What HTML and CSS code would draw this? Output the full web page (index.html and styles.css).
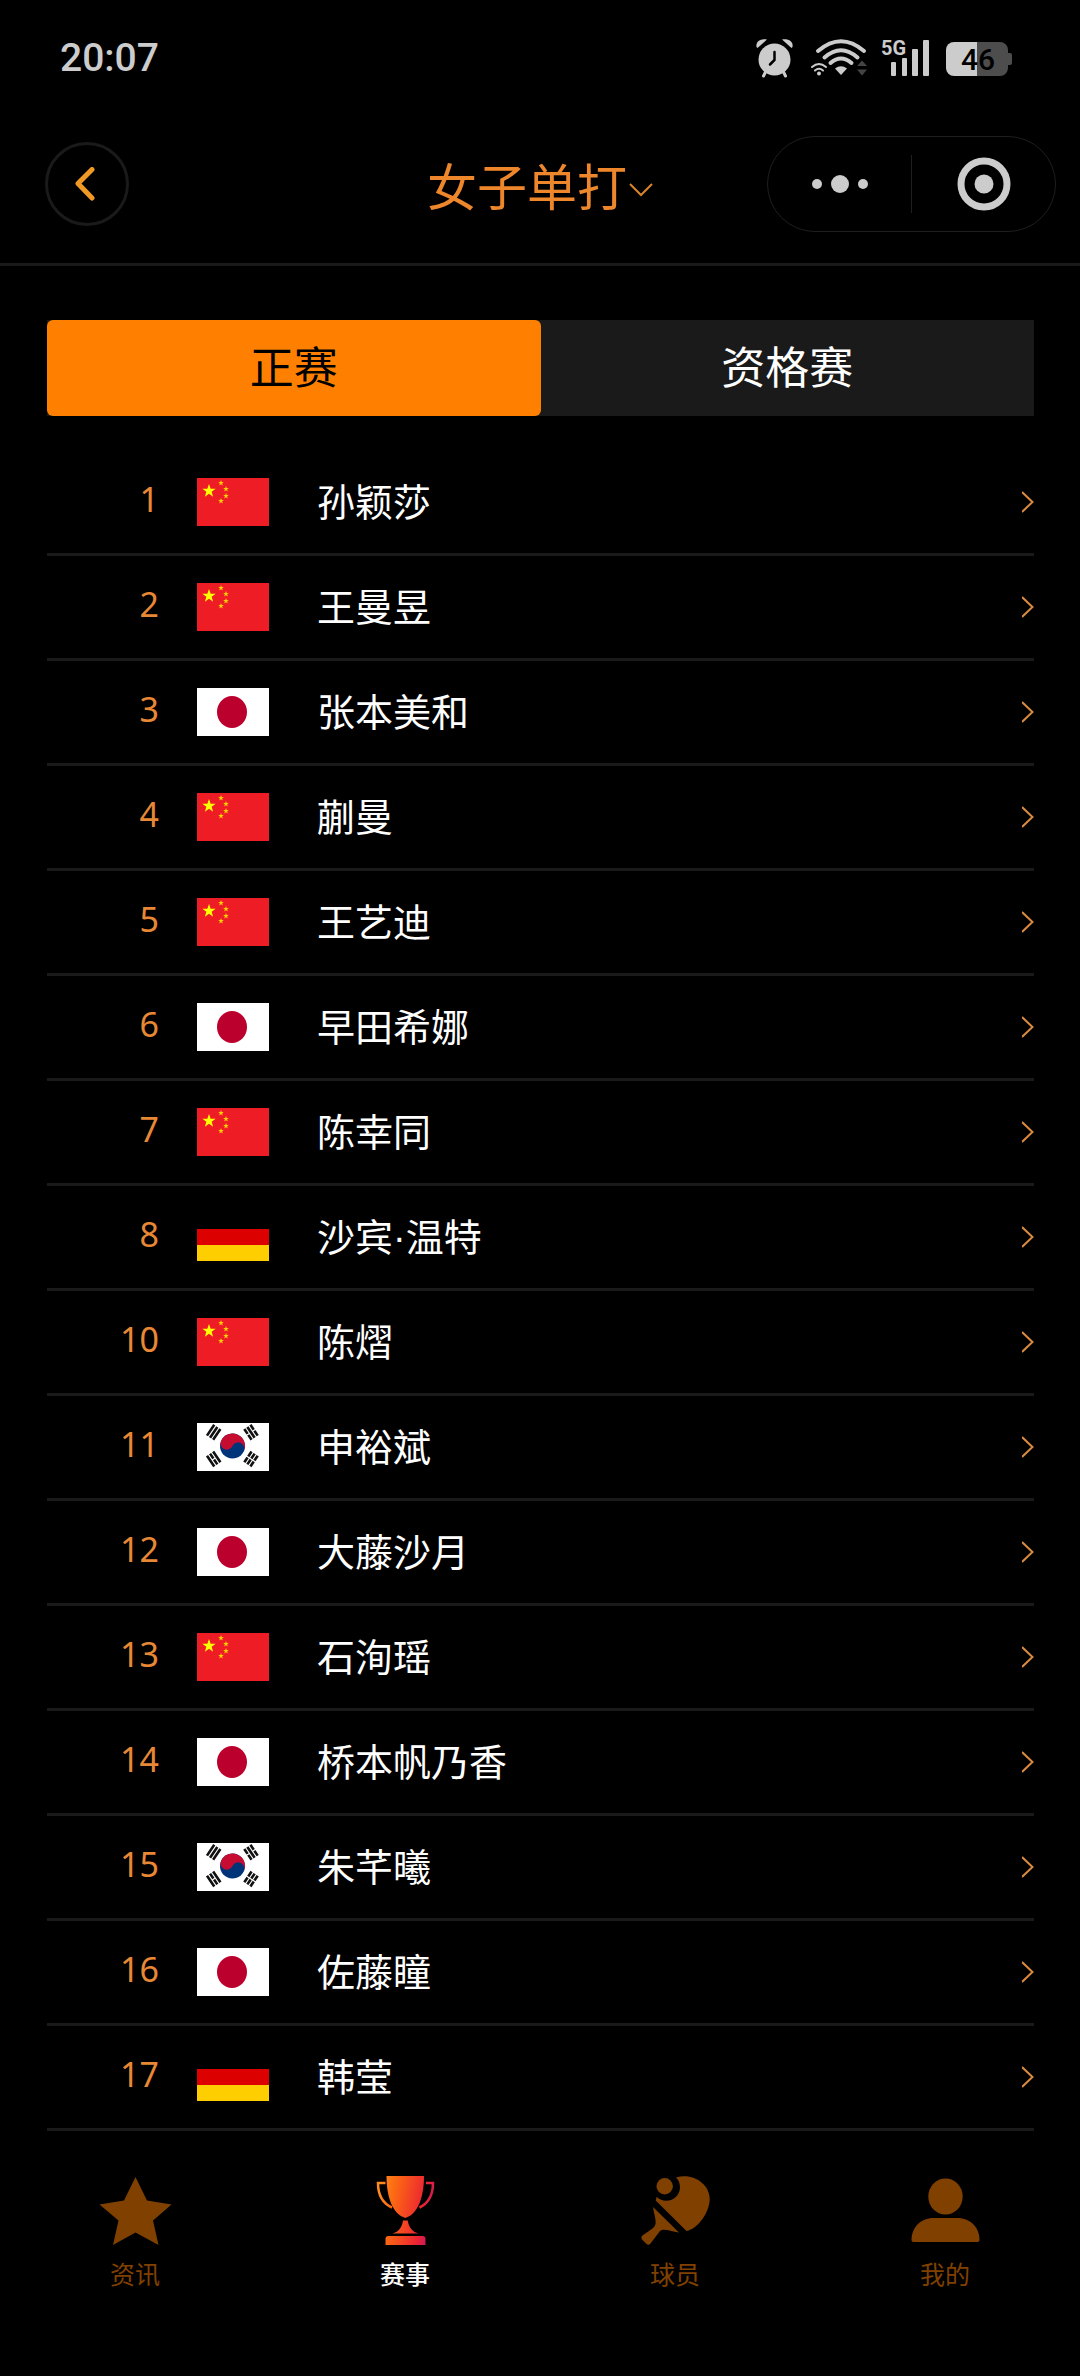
FILE: index.html
```html
<!DOCTYPE html>
<html lang="zh-CN">
<head>
  <meta charset="UTF-8" />
  <meta name="viewport" content="width=device-width, initial-scale=1.0"/>
  <title>女子单打</title>
  <link rel="stylesheet" href="styles.css">
</head>
<body>

  <!-- Shared shapes -->
  <svg class="sprite" aria-hidden="true">
    <symbol id="star" viewBox="-10 -10 20 20">
      <path d="M0-10 2.35-3.24 9.51-3.09 3.8 1.24 5.88 8.09 0 4-5.88 8.09-3.8 1.24-9.51-3.09-2.35-3.24Z"/>
    </symbol>
    <symbol id="flag-cn" viewBox="0 0 72 48">
      <rect width="72" height="48" fill="#ee1c25"/>
      <g fill="#ffff00">
        <use href="#star" x="5" y="6" width="14" height="14"/>
        <g opacity="0.8">
          <use href="#star" x="21" y="2" width="6" height="6"/>
          <use href="#star" x="26" y="8" width="6" height="6"/>
          <use href="#star" x="26" y="15" width="6" height="6"/>
          <use href="#star" x="21" y="20" width="6" height="6"/>
        </g>
      </g>
    </symbol>
    <symbol id="flag-jp" viewBox="0 0 72 48">
      <rect width="72" height="48" fill="#fff"/>
      <ellipse cx="35" cy="24" rx="15" ry="16" fill="#bc002d"/>
    </symbol>
    <symbol id="flag-de" viewBox="0 0 72 48">
      <rect width="72" height="48" fill="#000"/>
      <rect y="16" width="72" height="16" fill="#dd0000"/>
      <rect y="32" width="72" height="16" fill="#ffce00"/>
    </symbol>
    <symbol id="flag-kr" viewBox="0 0 72 48">
      <rect width="72" height="48" fill="#fff"/>
      <g transform="translate(35.5 23) rotate(25)">
        <circle r="12.5" fill="#003478"/>
        <path d="M-12.5 0A12.5 12.5 0 0 1 12.5 0A6.25 6.25 0 0 0 0 0A6.25 6.25 0 0 1-12.5 0Z" fill="#c60c30"/>
      </g>
      <g stroke="#111" stroke-width="2.6">
        <path transform="translate(16.7 9.3) rotate(-56)" d="M-6.5-3.7H6.5M-6.5 0H6.5M-6.5 3.7H6.5"/>
        <path transform="translate(54 9.3) rotate(56)" d="M-6.5-3.7H-.6M.6-3.7H6.5M-6.5 0H6.5M-6.5 3.7H-.6M.6 3.7H6.5"/>
        <path transform="translate(16.7 36) rotate(56)" d="M-6.5-3.7H6.5M-6.5 0H-.6M.6 0H6.5M-6.5 3.7H6.5"/>
        <path transform="translate(54 36) rotate(-56)" d="M-6.5-3.7H-.6M.6-3.7H6.5M-6.5 0H-.6M.6 0H6.5M-6.5 3.7H-.6M.6 3.7H6.5"/>
      </g>
    </symbol>
    <symbol id="arrow" viewBox="0 0 12 22">
      <path d="M0 1L10.5 11L0 21" fill="none" stroke="#d98a3f" stroke-width="2"/>
    </symbol>
  </svg>

  <!-- Status bar -->
  <div class="status-bar">
    <span class="time">20:07</span>
    <div class="status-icons">
      <svg width="37" height="40" viewBox="0 0 37 40" fill="#ccc">
        <circle cx="18.5" cy="21.5" r="16"/>
        <path d="M.5 9C-.5 3 5 .5 11 1.5L1.5 10Z"/>
        <path d="M36.5 9C37.5 3 32 .5 26 1.5L35.5 10Z"/>
        <path d="M10 33L7.5 38M27 33L29.5 38" stroke="#ccc" stroke-width="3" stroke-linecap="round"/>
        <path d="M18.5 14V22L14 26.5" fill="none" stroke="#000" stroke-width="2.5" stroke-linecap="round"/>
      </svg>
      <svg width="60" height="40" viewBox="0 0 60 40" fill="none" stroke="#ccc" stroke-linecap="round">
        <g stroke-width="4">
          <path d="M11 13Q34-6.5 57 13"/>
          <path d="M17.5 19.5Q34 5 50.5 19.5"/>
          <path d="M23.5 25Q34 16 44.5 25"/>
        </g>
        <path d="M28 30.5Q34 26 40 30.5L34 37Z" fill="#ccc" stroke="none"/>
        <path d="M5 29Q12 23 19 29M8 32.5Q12 29 16 32.5" stroke-width="2"/>
        <circle cx="12" cy="35.5" r="2" fill="#ccc" stroke="none"/>
        <path d="M50 28L55 22.5L60 28ZM50 31.5H60L55 37.5Z" fill="#444" stroke="none"/>
      </svg>
      <svg width="51" height="40" viewBox="0 0 51 40" fill="#ccc">
        <text x="0" y="17" class="signal-text">5G</text>
        <rect x="10" y="24" width="5" height="14" rx="1"/>
        <rect x="21" y="20" width="5" height="18" rx="1"/>
        <rect x="31" y="11" width="6" height="27" rx="1"/>
        <rect x="42" y="2" width="6" height="36" rx="1"/>
      </svg>
      <svg width="66" height="40" viewBox="0 0 66 40">
        <path d="M31 4H54A8 8 0 0 1 62 12V15H64A2 2 0 0 1 66 17V25A2 2 0 0 1 64 27H62V30A8 8 0 0 1 54 38H31Z" fill="#4d4d4d"/>
        <path d="M31 4H8A8 8 0 0 0 0 12V30A8 8 0 0 0 8 38H31Z" fill="#ccc"/>
        <text x="32" y="32" text-anchor="middle" class="battery-text">46</text>
      </svg>
    </div>
  </div>

  <!-- Title bar -->
  <header>
    <button class="back" aria-label="返回">
      <svg width="20" height="34" viewBox="0 0 20 34">
        <path d="M17 2.5L3 16.5L17 31" fill="none" stroke="#f09a25" stroke-width="5" stroke-linecap="round" stroke-linejoin="round"/>
      </svg>
    </button>
    <div class="title">
      <select aria-label="项目">
        <option>女子单打</option>
      </select>
      <svg width="24" height="14" viewBox="0 0 24 14">
        <path d="M1 1L12 12L23 1" fill="none" stroke="#d98426" stroke-width="2"/>
      </svg>
    </div>
    <div class="capsule">
      <button aria-label="更多">
        <svg width="58" height="54" viewBox="0 0 58 54" fill="#ccc">
          <circle cx="6" cy="27" r="5"/>
          <circle cx="29" cy="27" r="9"/>
          <circle cx="52" cy="27" r="5"/>
        </svg>
      </button>
      <button aria-label="关闭">
        <svg width="54" height="54" viewBox="0 0 54 54">
          <circle cx="27" cy="27" r="23" fill="none" stroke="#ccc" stroke-width="7"/>
          <circle cx="27" cy="27" r="9.5" fill="#ccc"/>
        </svg>
      </button>
    </div>
  </header>

  <main>
    <div class="tabs">
      <button class="active">正赛</button>
      <button>资格赛</button>
    </div>

    <!-- Seed list -->
    <ul class="players">
      <li><a href="#"><span class="rank">1</span><svg class="flag"><use href="#flag-cn"/></svg><span class="name">孙颖莎</span><svg class="arrow"><use href="#arrow"/></svg></a></li>
      <li><a href="#"><span class="rank">2</span><svg class="flag"><use href="#flag-cn"/></svg><span class="name">王曼昱</span><svg class="arrow"><use href="#arrow"/></svg></a></li>
      <li><a href="#"><span class="rank">3</span><svg class="flag"><use href="#flag-jp"/></svg><span class="name">张本美和</span><svg class="arrow"><use href="#arrow"/></svg></a></li>
      <li><a href="#"><span class="rank">4</span><svg class="flag"><use href="#flag-cn"/></svg><span class="name">蒯曼</span><svg class="arrow"><use href="#arrow"/></svg></a></li>
      <li><a href="#"><span class="rank">5</span><svg class="flag"><use href="#flag-cn"/></svg><span class="name">王艺迪</span><svg class="arrow"><use href="#arrow"/></svg></a></li>
      <li><a href="#"><span class="rank">6</span><svg class="flag"><use href="#flag-jp"/></svg><span class="name">早田希娜</span><svg class="arrow"><use href="#arrow"/></svg></a></li>
      <li><a href="#"><span class="rank">7</span><svg class="flag"><use href="#flag-cn"/></svg><span class="name">陈幸同</span><svg class="arrow"><use href="#arrow"/></svg></a></li>
      <li><a href="#"><span class="rank">8</span><svg class="flag"><use href="#flag-de"/></svg><span class="name">沙宾·温特</span><svg class="arrow"><use href="#arrow"/></svg></a></li>
      <li><a href="#"><span class="rank">10</span><svg class="flag"><use href="#flag-cn"/></svg><span class="name">陈熠</span><svg class="arrow"><use href="#arrow"/></svg></a></li>
      <li><a href="#"><span class="rank">11</span><svg class="flag"><use href="#flag-kr"/></svg><span class="name">申裕斌</span><svg class="arrow"><use href="#arrow"/></svg></a></li>
      <li><a href="#"><span class="rank">12</span><svg class="flag"><use href="#flag-jp"/></svg><span class="name">大藤沙月</span><svg class="arrow"><use href="#arrow"/></svg></a></li>
      <li><a href="#"><span class="rank">13</span><svg class="flag"><use href="#flag-cn"/></svg><span class="name">石洵瑶</span><svg class="arrow"><use href="#arrow"/></svg></a></li>
      <li><a href="#"><span class="rank">14</span><svg class="flag"><use href="#flag-jp"/></svg><span class="name">桥本帆乃香</span><svg class="arrow"><use href="#arrow"/></svg></a></li>
      <li><a href="#"><span class="rank">15</span><svg class="flag"><use href="#flag-kr"/></svg><span class="name">朱芊曦</span><svg class="arrow"><use href="#arrow"/></svg></a></li>
      <li><a href="#"><span class="rank">16</span><svg class="flag"><use href="#flag-jp"/></svg><span class="name">佐藤瞳</span><svg class="arrow"><use href="#arrow"/></svg></a></li>
      <li><a href="#"><span class="rank">17</span><svg class="flag"><use href="#flag-de"/></svg><span class="name">韩莹</span><svg class="arrow"><use href="#arrow"/></svg></a></li>
    </ul>
  </main>

  <!-- Bottom navigation -->
  <nav>
    <a href="#">
      <svg viewBox="0 0 76 72" fill="#804000">
        <path d="M38.5 2L50 25.5L74.5 29.5L56 45.5L61.5 70L38.5 57.5L16 70L21.5 45.5L2.5 29.5L27 25.5Z"/>
      </svg>
      <span>资讯</span>
    </a>
    <a href="#" class="active">
      <svg viewBox="0 0 76 72">
        <defs>
          <linearGradient id="cup" gradientUnits="userSpaceOnUse" x1="10" y1="30" x2="66" y2="40">
            <stop offset="0" stop-color="#ff8a1e"/>
            <stop offset="0.25" stop-color="#fc6a12"/>
            <stop offset="0.8" stop-color="#ec2433"/>
            <stop offset="1" stop-color="#c8185a"/>
          </linearGradient>
        </defs>
        <g fill="url(#cup)">
          <path d="M19.5 1H57C57 22 51 39 38.3 43C25.5 39 19.5 22 19.5 1Z"/>
          <path d="M36 45.5H40.7C42 53 46 57 51.5 58.5H25.5C31 57 35 53 36 45.5Z"/>
          <path d="M21.5 61H55.5Q58.5 61 58.5 64V70H18.5V64Q18.5 61 21.5 61Z"/>
        </g>
        <path d="M18.5 8H11C11 20 15 28 25 32.5M59 8H66C66 20 62 28 52.5 32.5" fill="none" stroke="url(#cup)" stroke-width="2.5"/>
      </svg>
      <span>赛事</span>
    </a>
    <a href="#">
      <svg viewBox="0 0 76 72" fill="#804000">
        <circle cx="27.7" cy="11.3" r="8.2"/>
        <path d="M39 2.5C56-2.5 72.7 9 72.7 24C72.7 37 61 54 49.5 56L18.7 25.5L19.7 21.7A13.3 13.3 0 0 0 39 2.5Z"/>
        <path d="M16 32L42 57.5C33 56.5 27 53 23 56L13.5 68.5Q11.5 71 9 68.5L5 64.5Q3.5 62 5.5 60.5L15.5 53.5C21.5 49 17.5 43 16 32Z"/>
      </svg>
      <span>球员</span>
    </a>
    <a href="#">
      <svg viewBox="0 0 76 72" fill="#804000">
        <ellipse cx="38.5" cy="21.5" rx="17.2" ry="18"/>
        <path d="M27 43H50C64 43 72.5 53 72.5 65Q72.5 67 70.5 67H6.5Q4.5 67 4.5 65C4.5 53 13 43 27 43Z"/>
      </svg>
      <span>我的</span>
    </a>
  </nav>

</body>
</html>
```
FILE: styles.css
```css
* {
  box-sizing: border-box;
}
body {
  font-family: "Noto Sans CJK SC", sans-serif;
  background-color: #000;
  color: #fff;
  margin: 0;
}
button, select {
  font-family: inherit;
  color: inherit;
  background: none;
  border: none;
  padding: 0;
  cursor: pointer;
}
a {
  color: inherit;
  text-decoration: none;
}
svg {
  display: block;
  flex-shrink: 0;
}
.sprite {
  position: absolute;
  width: 0;
  height: 0;
}

/* Status bar */
.status-bar {
  display: flex;
  justify-content: space-between;
  align-items: center;
  height: 116px;
  padding: 0 68px 0 60px;
}
.time {
  font-family: Roboto, sans-serif;
  font-size: 39px;
  font-weight: 500;
  color: #ccc;
}
.status-icons {
  display: flex;
  gap: 14px;
}
.status-icons svg {
  overflow: visible;
}
.signal-text {
  font-family: Roboto, sans-serif;
  font-size: 20px;
  font-weight: 700;
}
.battery-text {
  font-family: Roboto, sans-serif;
  font-size: 30px;
  font-weight: 500;
}

/* Title bar */
header {
  display: grid;
  grid-template-columns: 1fr auto 1fr;
  align-items: center;
  padding: 20px 24px 31px;
  border-bottom: 3px solid #1a1a1a;
}
.back {
  display: flex;
  justify-content: center;
  align-items: center;
  width: 84px;
  height: 84px;
  margin-left: 21px;
  padding-right: 4px;
  border: 3px solid #1a1a1a;
  border-radius: 50%;
}
.title {
  display: flex;
  align-items: center;
  gap: 2px;
  color: #ee862c;
}
.title select {
  appearance: none;
  font-size: 50px;
  line-height: 72px;
}
.title svg {
  margin-top: 12px;
}
.capsule {
  display: flex;
  justify-self: end;
  width: 289px;
  height: 96px;
  padding: 18px 0;
  border: 1px solid #1f1f1f;
  border-radius: 48px;
}
.capsule button {
  flex: 1;
  display: flex;
  justify-content: center;
  align-items: center;
}
.capsule button + button {
  border-left: 1px solid #1f1f1f;
}

main {
  padding: 54px 46px 0 47px;
}
.tabs {
  display: grid;
  grid-template-columns: 1fr 1fr;
  background-color: #1a1a1a;
  margin-bottom: 35px;
}
.tabs button {
  height: 96px;
  padding-bottom: 6px;
  font-size: 44px;
  border-radius: 6px;
}
.tabs .active {
  background-color: #ff8000;
  color: #000;
}

/* Players */
.players {
  list-style: none;
  margin: 0;
  padding: 0;
}
.players a {
  display: flex;
  align-items: center;
  height: 105px;
  border-bottom: 3px solid #1a1a1a;
}
.rank {
  width: 112px;
  padding-bottom: 6px;
  font-family: "Noto Sans", sans-serif;
  font-size: 34px;
  text-align: right;
  color: #e88835;
}
.flag {
  width: 72px;
  height: 48px;
  margin: 0 48px 0 38px;
}
.name {
  flex: 1;
  padding-bottom: 6px;
  font-family: "Liberation Sans", "Noto Sans CJK SC", sans-serif;
  font-size: 38px;
}
.arrow {
  width: 12px;
  height: 22px;
}

/* Bottom navigation */
nav {
  display: flex;
  padding: 44px 0 80px;
}
nav a {
  flex: 1;
  display: flex;
  flex-direction: column;
  align-items: center;
  gap: 8px;
  font-size: 25px;
  line-height: 36px;
  color: #804000;
}
nav svg {
  width: 76px;
  height: 72px;
}
nav .active {
  color: #fff;
  font-weight: 500;
}
```
